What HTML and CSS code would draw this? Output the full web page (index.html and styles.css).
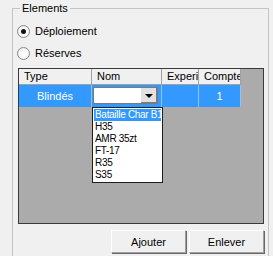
FILE: index.html
```html
<!DOCTYPE html>
<html lang="fr">
<head>
  <meta charset="UTF-8">
  <title>Elements</title>
  <link rel="stylesheet" href="styles.css">
</head>
<body>

  <!-- Group box -->
  <fieldset class="group">
    <legend>Elements</legend>
    <div class="group-body">

      <label class="radio-row">
        <span class="radio checked"></span>
        <span>Déploiement</span>
      </label>
      <label class="radio-row">
        <span class="radio"></span>
        <span>Réserves</span>
      </label>

      <!-- Data grid -->
      <div class="grid">
        <div class="grid-head">
          <div class="cell col-type">Type</div>
          <div class="cell col-nom">Nom</div>
          <div class="cell col-exp">Experience</div>
          <div class="cell col-cpt">Compte</div>
        </div>
        <div class="grid-row selected">
          <div class="cell col-type center">Blindés</div>
          <div class="cell col-nom">
            <div class="combo">
              <span class="combo-text"></span>
              <span class="combo-btn"><span class="arrow"></span></span>
            </div>
          </div>
          <div class="cell col-exp"></div>
          <div class="cell col-cpt center">1</div>
        </div>

        <ul class="droplist">
          <li class="active">Bataille Char B1</li>
          <li>H35</li>
          <li>AMR 35zt</li>
          <li>FT-17</li>
          <li>R35</li>
          <li>S35</li>
        </ul>
      </div>

      <!-- Buttons -->
      <div class="actions">
        <button class="btn">Ajouter</button>
        <button class="btn">Enlever</button>
      </div>

    </div>
  </fieldset>

</body>
</html>
```

FILE: styles.css
```css
/* General */
* {
  box-sizing: border-box;
}

body {
  margin: 0;
  padding-top: 1px;
  background-color: #f0f0f0;
  font-family: "Liberation Sans", Arial, sans-serif;
  font-size: 11px;
  color: #000;
  overflow: hidden;
}

/* Group box */
.group {
  margin: 0 0 0 12px;
  padding: 0 0 12px 0;
  width: 257px;
  border: 1px solid #c4c4c4;
}

.group legend {
  margin-left: 7px;
  padding: 0 2px;
  height: 14px;
  line-height: 14px;
}

.group-body {
  padding: 5px 0 0 4px;
}

/* Radio buttons */
.radio-row {
  display: flex;
  align-items: center;
  height: 22px;
  gap: 5px;
}

.radio {
  width: 13px;
  height: 13px;
  border-radius: 50%;
  border: 1px solid #8a8a8a;
  background: radial-gradient(circle at 60% 60%, #ffffff 0%, #f4f4f4 60%, #dcdcdc 100%);
  display: flex;
  align-items: center;
  justify-content: center;
}

.radio.checked::after {
  content: "";
  width: 5px;
  height: 5px;
  border-radius: 50%;
  background: #111;
}

/* Grid */
.grid {
  position: relative;
  margin: 4px 0 0 1px;
  width: 246px;
  height: 156px;
  border: 1px solid #3a3a3a;
  background-color: #ababab;
}

.grid-head,
.grid-row {
  display: flex;
}

.grid-head {
  height: 16px;
}

.grid-head .cell {
  background-color: #f0f0f0;
  border-right: 1px solid #a0a0a0;
  border-bottom: 1px solid #a0a0a0;
  padding-left: 5px;
  line-height: 15px;
  white-space: nowrap;
  overflow: hidden;
}

.grid-row {
  height: 22px;
}

.grid-row .cell {
  background-color: #3399ff;
  color: #fff;
  border-right: 1px solid #8cc3f8;
  line-height: 22px;
}

.cell.center {
  text-align: center;
}

.col-type { width: 73px; }
.col-nom { width: 70px; }
.col-exp { width: 37px; }
.col-cpt { width: 42px; }

.grid-row .col-nom {
  padding: 2px 3px 0 1px;
}

/* Combo box in the cell */
.combo {
  display: flex;
  height: 17px;
  background: #fff;
  border: 1px solid #7a7a7a;
}

.combo-text {
  flex: 1;
}

.combo-btn {
  width: 17px;
  border-left: 1px solid #fff;
  background: #e1e1e1;
  box-shadow: inset -1px -1px 0 #7a7a7a;
  display: flex;
  align-items: center;
  justify-content: center;
}

.arrow {
  width: 0;
  height: 0;
  border-left: 4px solid transparent;
  border-right: 4px solid transparent;
  border-top: 4px solid #000;
}

/* Dropdown list */
.droplist {
  position: absolute;
  left: 73px;
  top: 38px;
  width: 71px;
  margin: 0;
  padding: 1px 1px;
  list-style: none;
  background: #fff;
  border: 1px solid #1e1e1e;
}

.droplist li {
  height: 12px;
  line-height: 12px;
  padding-left: 1px;
  font-size: 10px;
  letter-spacing: -0.3px;
  white-space: nowrap;
  overflow: hidden;
}

.droplist li.active {
  background-color: #3399ff;
  color: #fff;
}

/* Buttons */
.actions {
  display: flex;
  justify-content: flex-end;
  gap: 3px;
  margin-top: 6px;
  width: 247px;
}

.btn {
  width: 75px;
  height: 23px;
  font-family: inherit;
  font-size: 11px;
  background-color: #f0f0f0;
  border: 1px solid;
  border-color: #ffffff #a0a0a0 #a0a0a0 #ffffff;
  box-shadow: 1px 1px 0 #696969;
  padding: 0;
}
```
